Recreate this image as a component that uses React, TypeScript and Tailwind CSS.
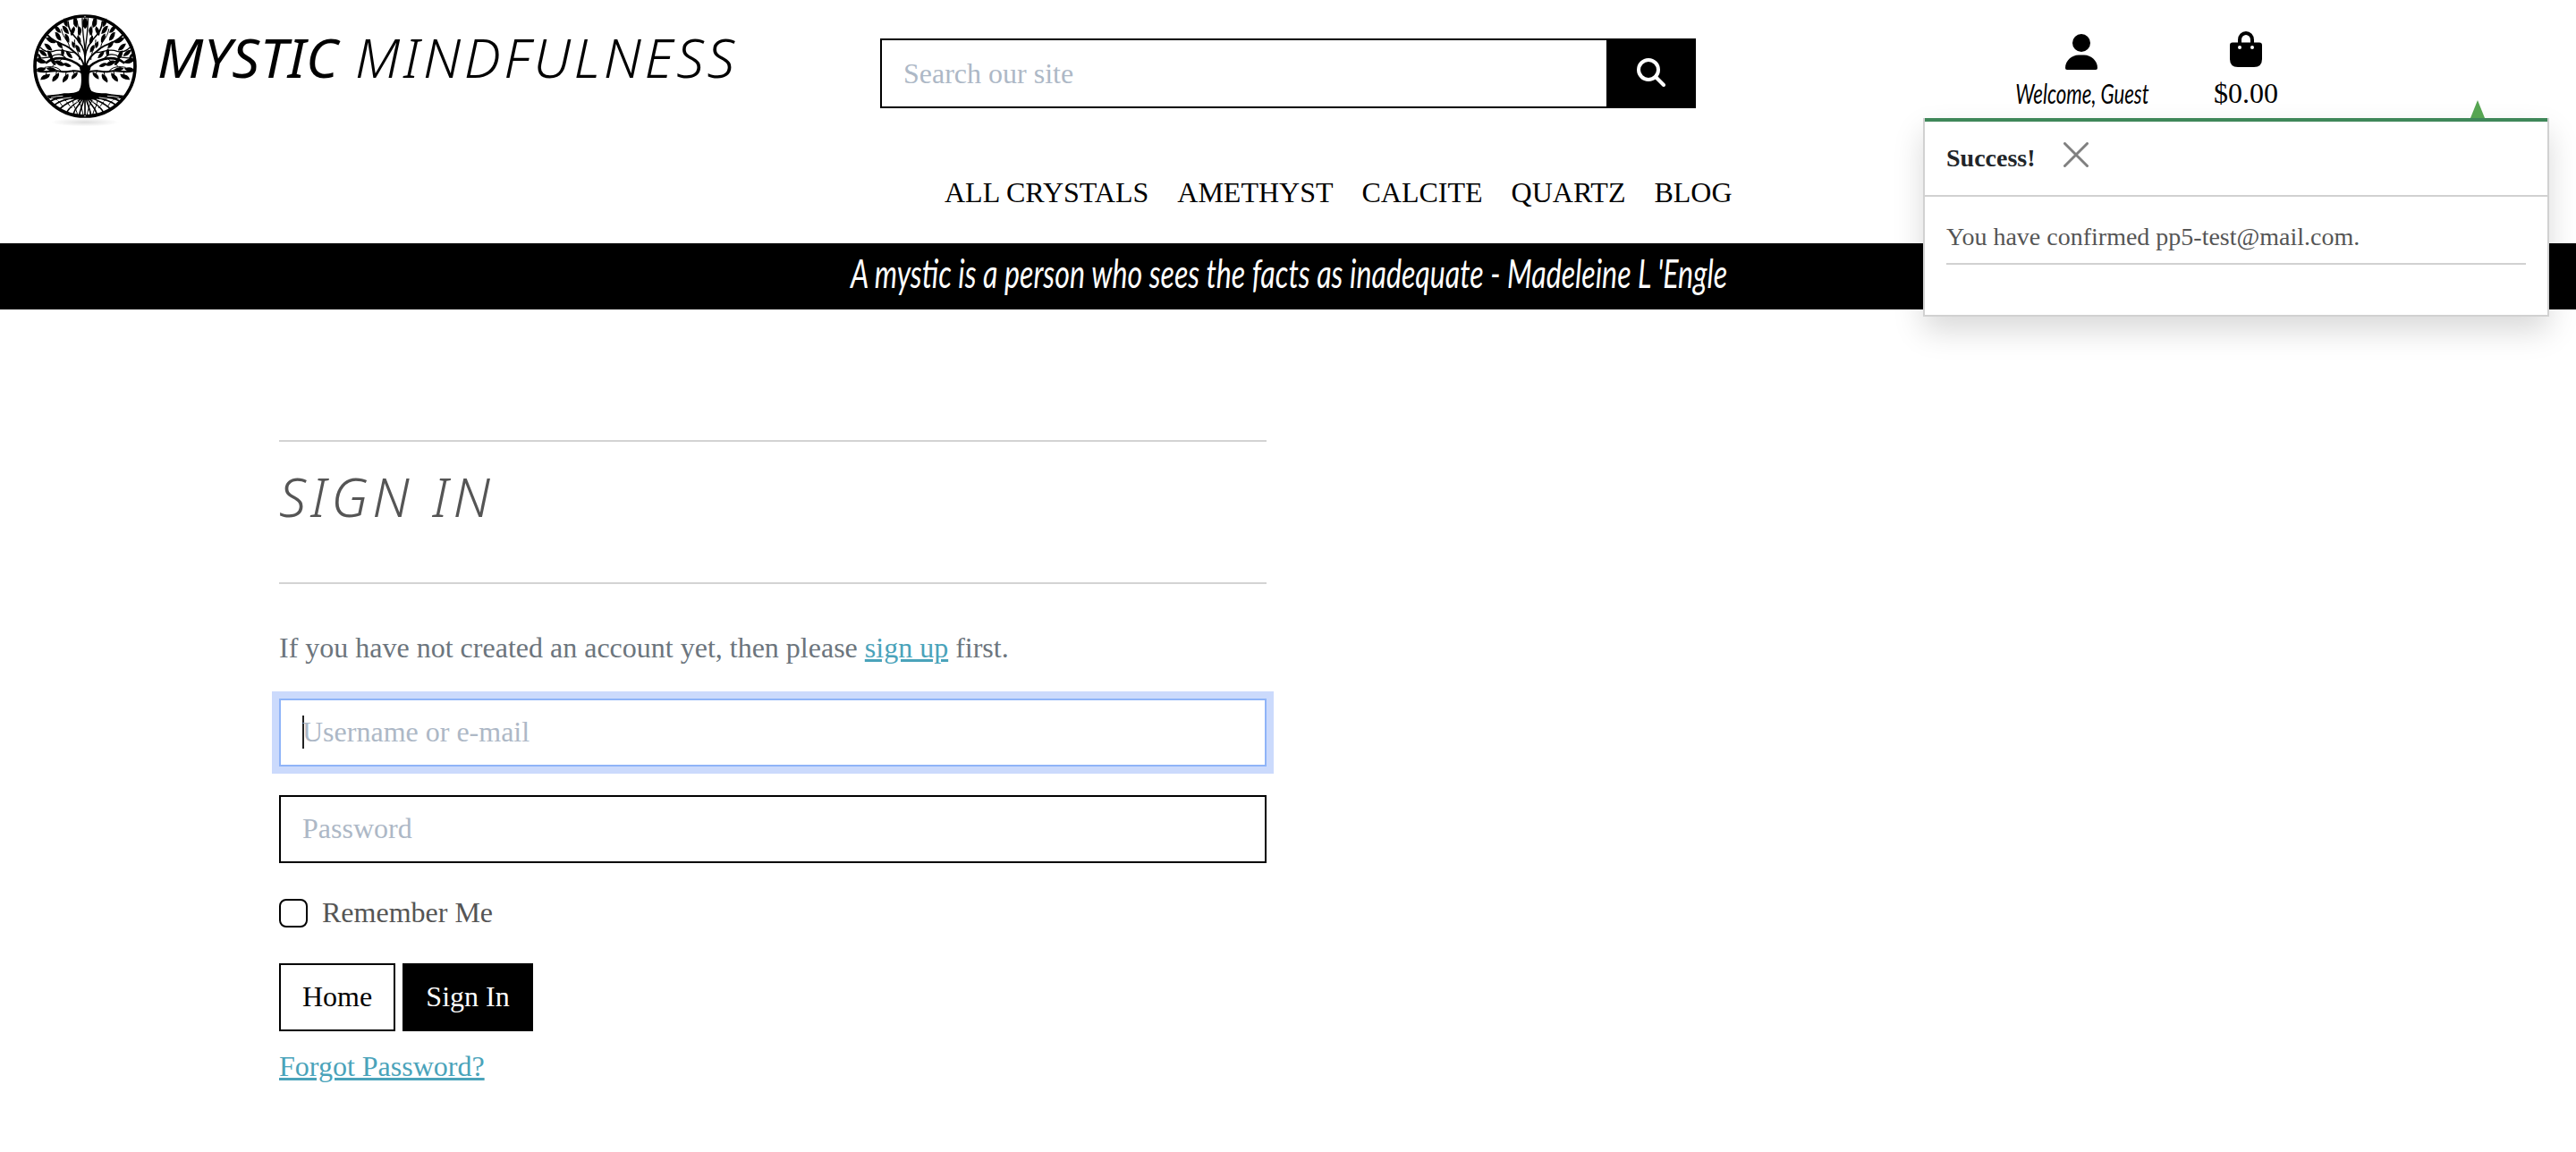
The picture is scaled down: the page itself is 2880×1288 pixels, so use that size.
import React from "react";

const serif = "font-['Liberation_Serif',serif]";
const script = "font-['Lato','Open_Sans',sans-serif] italic";
const title = "font-['Noto_Sans','Lato',sans-serif] italic";

// Leaves of the left half of the crown: x, y, rotation in degrees, length.
const leaves: [number, number, number, number][] = [
  [92, 258, -30, 38], [127, 259, -55, 38], [160, 262, -60, 36], [190, 254, -50, 32],
  [78, 205, 10, 38], [78, 232, -8, 34], [108, 184, 60, 36], [84, 178, 35, 34],
  [102, 158, 40, 36], [110, 135, 25, 38], [135, 122, 55, 36], [140, 150, 50, 32],
  [133, 98, 45, 34], [165, 128, 65, 34], [160, 100, 50, 36], [160, 76, 65, 32],
  [193, 75, 75, 38], [184, 104, -75, 34], [207, 104, 85, 32], [205, 134, 70, 32],
  [172, 184, 45, 32], [140, 212, 20, 38], [118, 206, 55, 32], [202, 163, 60, 30],
  [150, 176, 80, 28], [112, 232, 5, 34], [165, 218, 15, 30], [72, 190, 60, 24],
  [224, 78, 85, 38], [186, 150, 70, 26],
];

function HalfTree() {
  return (
    <g>
      <g fill="none" stroke="#000" strokeLinecap="round">
        <path strokeWidth="8" d="M222 235C205 215 190 205 162 198C135 192 112 198 96 210" />
        <path strokeWidth="6" d="M218 245C190 228 170 246 146 240C120 233 95 246 66 238" />
        <path strokeWidth="6" d="M224 225C214 190 195 180 172 160C150 144 128 148 100 118" />
        <path strokeWidth="5" d="M226 215C228 180 222 160 205 140C190 118 170 110 168 72" />
        <path strokeWidth="4" d="M226 190C226 150 216 120 216 62" />
        <path strokeWidth="4" d="M190 176C165 178 150 160 118 172C100 178 84 168 76 160" />
        <path strokeWidth="4" d="M162 198C150 180 130 178 112 190C96 196 80 192 64 198" />
        <path strokeWidth="3" d="M205 140C200 120 208 100 196 62" />
        <path strokeWidth="3" d="M172 160C176 140 150 130 146 98" />
        <path strokeWidth="3" d="M146 240C135 222 110 222 90 226M185 236L190 250M162 240L160 256M130 237L128 252M96 242L94 254" />
        <path strokeWidth="3" d="M206 200C206 170 188 160 190 134M150 196C140 210 124 210 116 222" />
      </g>
      {leaves.map(([x, y, r, l], i) => (
        <path
          key={i}
          d="M-10 0Q-3 -8 10 0Q3 8 -10 0Z"
          transform={`translate(${x} ${y}) rotate(${r}) scale(${l / 20})`}
        />
      ))}
      <path d="M226 215L206 222L212 250C214 275 212 296 204 305C180 318 160 308 140 316L96 320L104 330L226 335Z" />
      <g fill="none" stroke="#000" strokeWidth="5" strokeLinecap="round">
        <path d="M206 318C170 322 140 322 108 340" />
        <path d="M208 322C180 330 150 332 122 352" />
        <path d="M212 322C190 338 165 340 140 366" />
        <path d="M214 326C205 345 175 350 164 378" />
        <path d="M218 326C212 350 190 358 186 386" />
        <path d="M222 326C220 350 208 365 206 388" />
        <path strokeWidth="3" d="M112 322C130 336 140 338 150 358M140 318C160 332 165 346 180 362M186 334C180 352 196 360 200 386M204 340C214 356 216 372 220 390" />
      </g>
      <path
        d="M112 327Q130 322 150 322M128 338Q150 328 178 327M150 347Q166 335 186 333M172 360Q186 345 200 340"
        fill="none"
        stroke="#fff"
        strokeWidth="2.500"
        strokeLinecap="round"
      />
    </g>
  );
}

function TreeLogo() {
  return (
    <svg viewBox="0 0 450 450" className="size-[150px] shrink-0" aria-label="Tree of life">
      <defs>
        <radialGradient id="ground">
          <stop offset="0" stopColor="#000" stopOpacity="0.13" />
          <stop offset="1" stopColor="#000" stopOpacity="0" />
        </radialGradient>
      </defs>
      <ellipse cx="225" cy="410" rx="115" ry="14" fill="url(#ground)" />
      <HalfTree />
      <g transform="matrix(-1 0 0 1 451 0)">
        <HalfTree />
      </g>
      <path d="M225 240V388" stroke="#000" strokeWidth="5" />
      <circle cx="225" cy="222" r="168" fill="none" stroke="#000" strokeWidth="11" />
      <circle cx="225" cy="55" r="2" fill="#fff" />
      <circle cx="225" cy="389" r="2" fill="#fff" />
    </svg>
  );
}

function Header() {
  return (
    <header className="relative flex h-[272px] flex-col">
      <div className="flex h-[150px] items-start">
        <a className="flex h-[150px] w-[984px] items-start pl-5">
          <TreeLogo />
          <span className={`${title} ml-[6px] mt-[28px] flex whitespace-nowrap text-[61px] leading-[72px] text-black`}>
            <span className="w-[221px] font-normal tracking-[0.5px]">MYSTIC</span>
            <span className="font-light tracking-[3.6px]">MINDFULNESS</span>
          </span>
        </a>
        <form className="mt-[43px] flex h-[78px] w-[912px] border-2 border-black">
          <div className="flex flex-1 items-center px-6 pb-[1px] text-[32px] text-[#adb8c6]">Search our site</div>
          <button type="button" className="flex w-[98px] items-start bg-black pl-[34px] pt-5">
            <svg viewBox="0 0 32 32" className="size-8" fill="none" stroke="#fff">
              <circle cx="13" cy="13" r="11" strokeWidth="4" />
              <path d="M21 21L30 30" strokeWidth="4" strokeLinecap="round" />
            </svg>
          </button>
        </form>
        <div className="ml-[358px] flex text-[32px] leading-9 text-black">
          <a className="flex w-[150px] flex-col items-center pt-[38px]">
            <svg viewBox="0 0 36 40" className="mr-1 h-10 w-9">
              <circle cx="18" cy="10" r="10" />
              <path d="M15 23.500H21C29 23.500 36 30 36 38Q36 40 34 40H2Q0 40 0 38C0 30 7 23.500 15 23.500Z" />
            </svg>
            <span className={`${script} mr-0.5 mt-[8px] scale-x-[0.74] whitespace-nowrap text-[30px] leading-9`}>Welcome, Guest</span>
          </a>
          <a className="ml-[71px] flex w-[72px] flex-col items-center pt-[35px]">
            <svg viewBox="0 0 36 40" className="h-10 w-9">
              <path d="M11 14V9.500a7 7.500 0 0 1 14 0V14" fill="none" stroke="#000" strokeWidth="4" />
              <path d="M3 12.500H33Q36 12.500 36 15.500V31Q36 40 27 40H9Q0 40 0 31V15.500Q0 12.500 3 12.500Z" />
              <circle cx="11" cy="18" r="2" fill="#fff" />
              <circle cx="25" cy="18" r="2" fill="#fff" />
            </svg>
            <span className="mt-[11px]">$0.00</span>
          </a>
        </div>
      </div>
      <nav className="mt-[47px] flex gap-8 pl-[1056px] text-[32px] leading-9 text-black">
        <a>ALL CRYSTALS</a>
        <a>AMETHYST</a>
        <a>CALCITE</a>
        <a>QUARTZ</a>
        <a>BLOG</a>
      </nav>
    </header>
  );
}

function Toast() {
  return (
    <div className="absolute left-[2150px] top-[112px] w-[700px]">
      <svg viewBox="0 0 16 20" className="ml-[612px] block h-5 w-4">
        <path d="M8 0L16 20H0Z" fill="#56a552" />
      </svg>
      <div className="h-[222px] border-x-2 border-b-2 border-[#d1d1d1] bg-white shadow-[0_16px_32px_rgba(0,0,0,0.15)]">
        <div className="flex h-[88px] items-start border-b-2 border-[#d1d1d1] border-t-4 border-t-[#3f8759] pl-6">
          <strong className="mt-[25px] text-[28px] leading-8 text-[#212529]">Success!</strong>
          <svg viewBox="0 0 28 28" className="ml-[31px] mt-[23px] size-7" stroke="#808080" strokeWidth="3" strokeLinecap="round">
            <path d="M1.500 1.500L26.500 26.500M26.500 1.500L1.500 26.500" />
          </svg>
        </div>
        <div className="px-6 pt-[29px]">
          <p className="h-[47px] border-b-2 border-[#d1d1d1] text-[28px] leading-8 text-[#555]">You have confirmed pp5-test@mail.com.</p>
        </div>
      </div>
    </div>
  );
}

function SignIn() {
  return (
    <main className="ml-[312px] mt-[146px] w-[1104px] text-[32px] leading-9">
      <h1 className={`${title} h-[161px] border-y-2 border-[#d3d3d3] pt-[25px] text-[60px] font-light leading-[72px] tracking-[5px] text-[#555]`}>
        SIGN IN
      </h1>
      <p className="mt-[53px] text-[#6c757d]">
        If you have not created an account yet, then please <a className="text-[#4aa3ba] underline">sign up</a> first.
      </p>
      <div className="mt-[39px] flex h-[76px] items-center border-2 border-[#8fb4f8] pb-0.5 pl-6 text-[#adb8c6] shadow-[0_0_0_8px_#cbdafc]">
        <span className="-mr-0.5 h-[37px] w-0.5 bg-[#222]" />
        Username or e-mail
      </div>
      <div className="mt-8 flex h-[76px] items-center border-2 border-black pb-0.5 pl-6 text-[#adb8c6]">Password</div>
      <label className="mt-[38px] flex h-9 items-center gap-4 text-[#555]">
        <span className="size-8 rounded-lg border-2 border-black bg-white" />
        <span className="pb-0.5">Remember Me</span>
      </label>
      <div className="mt-[38px] flex gap-2">
        <button type="button" className="h-[76px] w-[130px] border-2 border-black pb-0.5 text-black">Home</button>
        <button type="button" className="h-[76px] w-[146px] bg-black pb-0.5 text-white">Sign In</button>
      </div>
      <a className="mt-[21px] inline-block text-[#4aa3ba] underline">Forgot Password?</a>
    </main>
  );
}

export default function App() {
  return (
    <div className={`${serif} relative h-[1288px] w-[2880px] overflow-hidden bg-white`}>
      <Header />
      <div className={`${script} flex h-[74px] items-center bg-black pb-[9px] pl-[951px] text-[44px] leading-[60px] text-white`}>
        <span className="inline-block origin-left scale-x-[0.731] whitespace-nowrap">A mystic is a person who sees the facts as inadequate - Madeleine L 'Engle</span>
      </div>
      <SignIn />
      <Toast />
    </div>
  );
}
